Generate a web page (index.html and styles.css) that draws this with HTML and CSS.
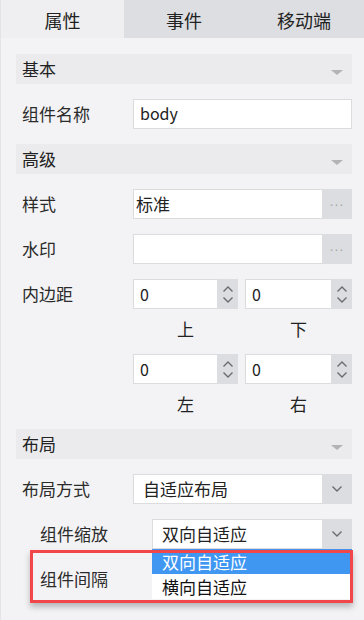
FILE: index.html
```html
<!DOCTYPE html>
<html lang="zh-CN">
<head>
  <meta charset="UTF-8">
  <meta name="viewport" content="width=device-width, initial-scale=1.0">
  <title>属性面板</title>
  <link rel="stylesheet" href="styles.css">
</head>
<body>
  <div class="panel">
    <!-- Tabs -->
    <div class="tabs">
      <div class="tab active">属性</div>
      <div class="tab">事件</div>
      <div class="tab">移动端</div>
    </div>

    <div class="props">
      <!-- 基本 -->
      <div class="group-head">基本<span class="caret"></span></div>
      <div class="row">
        <div class="lbl">组件名称</div>
        <div class="field text">body</div>
      </div>

      <!-- 高级 -->
      <div class="group-head">高级<span class="caret"></span></div>
      <div class="row">
        <div class="lbl">样式</div>
        <div class="field combo">
          <div class="val tight">标准</div>
          <div class="more">...</div>
        </div>
      </div>
      <div class="row">
        <div class="lbl">水印</div>
        <div class="field combo">
          <div class="val"></div>
          <div class="more">...</div>
        </div>
      </div>
      <div class="row pad-row">
        <div class="lbl">内边距</div>
        <div class="pad-grid">
          <div class="pad-cell">
            <div class="spin"><div class="val num">0</div><div class="arrows"><svg width="12" height="8" viewBox="0 0 12 8"><path d="M1.5 6.5 6 2l4.5 4.5"/></svg><svg width="12" height="8" viewBox="0 0 12 8"><path d="M1.5 1.5 6 6l4.5-4.5"/></svg></div></div>
            <div class="cap">上</div>
          </div>
          <div class="pad-cell">
            <div class="spin"><div class="val num">0</div><div class="arrows"><svg width="12" height="8" viewBox="0 0 12 8"><path d="M1.5 6.5 6 2l4.5 4.5"/></svg><svg width="12" height="8" viewBox="0 0 12 8"><path d="M1.5 1.5 6 6l4.5-4.5"/></svg></div></div>
            <div class="cap">下</div>
          </div>
          <div class="pad-cell">
            <div class="spin"><div class="val num">0</div><div class="arrows"><svg width="12" height="8" viewBox="0 0 12 8"><path d="M1.5 6.5 6 2l4.5 4.5"/></svg><svg width="12" height="8" viewBox="0 0 12 8"><path d="M1.5 1.5 6 6l4.5-4.5"/></svg></div></div>
            <div class="cap">左</div>
          </div>
          <div class="pad-cell">
            <div class="spin"><div class="val num">0</div><div class="arrows"><svg width="12" height="8" viewBox="0 0 12 8"><path d="M1.5 6.5 6 2l4.5 4.5"/></svg><svg width="12" height="8" viewBox="0 0 12 8"><path d="M1.5 1.5 6 6l4.5-4.5"/></svg></div></div>
            <div class="cap">右</div>
          </div>
        </div>
      </div>

      <!-- 布局 -->
      <div class="group-head">布局<span class="caret"></span></div>
      <div class="row">
        <div class="lbl">布局方式</div>
        <div class="field select">
          <div class="val">自适应布局</div>
          <div class="drop"><svg width="12" height="8" viewBox="0 0 12 8"><path d="M1.5 1.5 6 6l4.5-4.5"/></svg></div>
        </div>
      </div>

      <div class="sub">
        <div class="row">
          <div class="lbl">组件缩放</div>
          <div class="field select open">
            <div class="val">双向自适应</div>
            <div class="drop"><svg width="12" height="8" viewBox="0 0 12 8"><path d="M1.5 1.5 6 6l4.5-4.5"/></svg></div>
            <ul class="menu">
              <li class="sel">双向自适应</li>
              <li>横向自适应</li>
            </ul>
          </div>
        </div>
        <div class="row">
          <div class="lbl">组件间隔</div>
        </div>
        <div class="mark"></div>
      </div>
    </div>
  </div>
</body>
</html>
```

FILE: styles.css
```css
html, body {
  margin: 0;
  height: 100%;
}
body {
  background: #f3f3f5;
  font-family: "Noto Sans CJK SC", "Noto Sans", sans-serif;
  color: #333;
}
.panel {
  height: 100%;
  border-left: 1px solid #e4e4e6;
  box-sizing: border-box;
}

/* tabs */
.tabs {
  display: flex;
  height: 38px;
  background: #dddee1;
}
.tab {
  flex: 1;
  text-align: center;
  line-height: 40px;
  font-size: 18px;
  color: #222;
}
.tab.active {
  flex: 0 0 123px;
  background: #efeff1;
}

/* properties */
.props {
  display: flex;
  flex-direction: column;
  gap: 15px;
  padding: 16px 12px 0 15px;
}
.group-head {
  position: relative;
  height: 30px;
  line-height: 30px;
  padding-left: 6px;
  background: #ebebed;
  font-size: 17px;
  color: #222;
}
.caret {
  position: absolute;
  right: 9px;
  top: 16px;
  border-left: 6px solid transparent;
  border-right: 6px solid transparent;
  border-top: 5px solid #b3b3b5;
}
.row {
  display: flex;
  align-items: flex-start;
}
.lbl {
  flex: 0 0 111px;
  padding-left: 6px;
  line-height: 30px;
  font-size: 17px;
  color: #2b2b2b;
}
.field {
  flex: 1;
  height: 30px;
  box-sizing: border-box;
  background: #fff;
  border: 1px solid #dcdcde;
}
.text {
  padding-left: 6px;
  line-height: 27px;
  font-size: 16px;
  color: #222;
}
.combo, .select {
  display: flex;
  position: relative;
}
.val {
  flex: 1;
  padding-left: 9px;
  line-height: 28px;
  font-size: 17px;
  color: #222;
}
.val.tight {
  padding-left: 2px;
}
.more {
  flex: 0 0 30px;
  background: #dcdde0;
  margin: -1px -1px -1px 0;
  text-align: center;
  line-height: 26px;
  color: #a4a4a6;
  font-family: "DejaVu Sans", sans-serif;
  font-size: 12px;
  letter-spacing: 1px;
}
.drop {
  flex: 0 0 30px;
  background: #dcdde0;
  margin: -1px -1px -1px 0;
  display: flex;
  align-items: center;
  justify-content: center;
}
svg path {
  fill: none;
  stroke: #6c6c6e;
  stroke-width: 1.4;
}

/* padding spinners */
.pad-grid {
  flex: 1;
  display: grid;
  grid-template-columns: 105px 107px;
  column-gap: 7px;
  row-gap: 15px;
}
.spin {
  display: flex;
  height: 30px;
  box-sizing: border-box;
  background: #fff;
  border: 1px solid #dcdcde;
}
.num {
  padding-left: 6px;
  font-size: 16px;
}
.arrows {
  flex: 0 0 21px;
  margin: -1px -1px -1px 0;
  background: #dcdde0;
  display: flex;
  flex-direction: column;
  align-items: center;
  justify-content: center;
  gap: 3px;
}
.cap {
  height: 30px;
  padding-top: 10px;
  box-sizing: border-box;
  line-height: 20px;
  text-align: center;
  font-size: 17px;
  color: #222;
}

/* sub group */
.sub {
  position: relative;
  display: flex;
  flex-direction: column;
  gap: 15px;
}
.sub .lbl {
  flex: 0 0 112px;
  padding-left: 24px;
}
.menu {
  position: absolute;
  left: -1px;
  right: -1px;
  top: 29px;
  margin: 0;
  padding: 0;
  list-style: none;
  background: #fff;
  z-index: 2;
}
.menu li {
  height: 25px;
  line-height: 25px;
  padding-left: 10px;
  font-size: 17px;
  color: #111;
}
.menu li.sel {
  background: #3f97f2;
  color: #fff;
}
.mark {
  position: absolute;
  left: 14px;
  top: 31px;
  width: 323px;
  height: 53px;
  box-sizing: border-box;
  border: 3px solid #f2474a;
  box-shadow: 0 4px 6px rgba(0, 0, 0, 0.25);
  z-index: 3;
}
```
